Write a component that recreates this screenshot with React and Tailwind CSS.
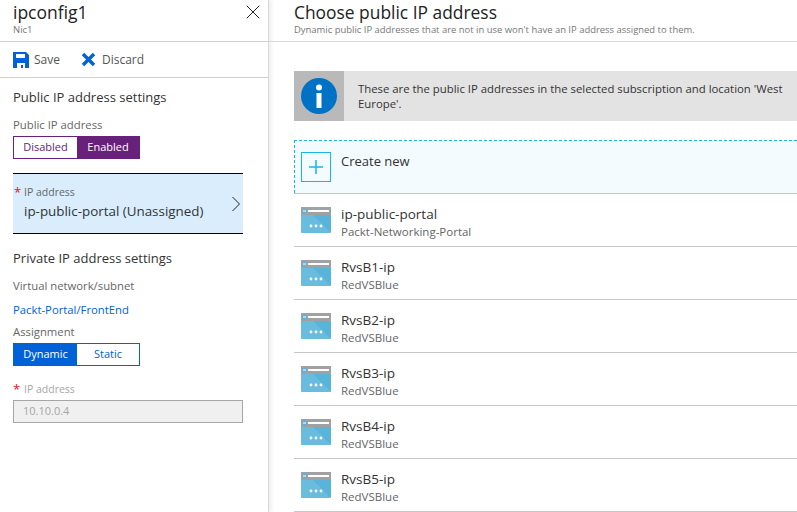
import React from "react";
import { X } from "lucide-react";

const font = { fontFamily: '"Open Sans", "Noto Sans", sans-serif' };

const SaveIcon = () => (
  <svg width="16" height="16" viewBox="0 0 16 16">
    <path d="M0 0h13l3 3v13H0z M3 2v4h9V2z M4 11v5h8v-5z" fill="#0062d6" fillRule="evenodd" />
    <rect x="8" y="13" width="2" height="3" fill="#0062d6" />
  </svg>
);

const DiscardIcon = () => (
  <svg width="15" height="15" viewBox="0 0 15 15">
    <path d="M2 2l11 11M13 2L2 13" stroke="#0062d6" strokeWidth="3.4" fill="none" />
  </svg>
);

const InfoIcon = () => (
  <svg width="36" height="36" viewBox="0 0 36 36">
    <circle cx="18" cy="18" r="18" fill="#0072c6" />
    <circle cx="18" cy="9.5" r="3" fill="#fff" />
    <rect x="15.5" y="15" width="5" height="15" fill="#fff" />
  </svg>
);

const PublicIpIcon = () => (
  <svg width="30" height="26" viewBox="0 0 30 26">
    <rect x="0" y="0" width="30" height="26" rx="1" fill="#59b4d9" />
    <path d="M0 26V8h12L30 26z" fill="#7cc5e3" opacity="0.45" />
    <rect x="0" y="0" width="30" height="8" fill="#a0a1a2" />
    <rect x="7" y="3" width="21" height="2" fill="#fff" />
    <circle cx="3.5" cy="4" r="2.5" fill="#59b4d9" />
    <path d="M2 4h3" stroke="#fff" strokeWidth="1" />
    <circle cx="10" cy="19" r="1.4" fill="#fff" />
    <circle cx="15" cy="19" r="1.4" fill="#fff" />
    <circle cx="20" cy="19" r="1.4" fill="#fff" />
  </svg>
);

const ips = [
  { name: "ip-public-portal", group: "Packt-Networking-Portal" },
  { name: "RvsB1-ip", group: "RedVSBlue" },
  { name: "RvsB2-ip", group: "RedVSBlue" },
  { name: "RvsB3-ip", group: "RedVSBlue" },
  { name: "RvsB4-ip", group: "RedVSBlue" },
  { name: "RvsB5-ip", group: "RedVSBlue" },
];

const IpRow = ({ item }) => (
  <div className="h-[53px] shrink-0 flex items-start gap-[10px] pl-[7px] pt-[11px] border-b border-[#c8c8c8]">
    <div className="pt-[2px]">
      <PublicIpIcon />
    </div>
    <div>
      <div className="text-[13.5px] leading-[18px] text-[#333]">{item.name}</div>
      <div className="mt-[1px] text-[11.5px] leading-[16px] text-[#666]">{item.group}</div>
    </div>
  </div>
);

export default function App() {
  return (
    <div style={font} className="w-[797px] h-[512px] overflow-hidden flex bg-white">
      {/* Left blade */}
      <div className="w-[269px] shrink-0 border-r border-[#d9d9d9] shadow-[2px_0_4px_rgba(0,0,0,0.08)] flex flex-col">
        <div className="h-[42px] shrink-0 border-b border-[#d0d0d0] pl-[13px] pr-[3px] flex justify-between">
          <div>
            <div className="text-[17.5px] leading-[24px] text-[#222]">ipconfig1</div>
            <div className="text-[9.5px] leading-[12px] text-[#777]">Nic1</div>
          </div>
          <X size={24} strokeWidth={1} className="text-[#222]" />
        </div>
        <div className="h-[36px] shrink-0 border-b border-[#d0d0d0] pl-[13px] flex items-center text-[12px] text-[#555]">
          <SaveIcon />
          <span className="ml-[5px]">Save</span>
          <span className="ml-[21px] flex">
            <DiscardIcon />
          </span>
          <span className="ml-[6px]">Discard</span>
        </div>

        <div className="text-[13px] leading-[18px] text-[#333] ml-[13px] mt-[10px]">Public IP address settings</div>
        <div className="text-[11.3px] leading-[14px] text-[#666] ml-[13px] mt-[12px]">Public IP address</div>
        <div className="flex ml-[13px] mt-[4px] w-[127px] h-[23px] border border-[#68217a] text-[11px]">
          <div className="w-[63px] flex items-center justify-center text-[#68217a]">Disabled</div>
          <div className="flex-1 flex items-center justify-center bg-[#68217a] text-white font-medium">Enabled</div>
        </div>

        <div className="ml-[13px] mt-[14px] w-[230px] h-[61px] bg-[#d9edfd] border-y border-black flex items-center justify-between pr-[2px]">
          <div className="pl-[1px] pb-[2px]">
            <div className="text-[10.5px] leading-[14px] text-[#666] flex">
              <span className="text-[#e81123] text-[13px] w-[10px]">*</span>IP address
            </div>
            <div className="mt-[3px] text-[13.4px] leading-[18px] text-[#333] ml-[10px]">ip-public-portal (Unassigned)</div>
          </div>
          <svg width="10" height="16" viewBox="0 0 10 16">
            <path d="M1.5 1l7 7-7 7" stroke="#222" strokeWidth="1" fill="none" />
          </svg>
        </div>

        <div className="text-[13px] leading-[18px] text-[#333] ml-[13px] mt-[15px]">Private IP address settings</div>
        <div className="text-[11.3px] leading-[14px] text-[#666] ml-[13px] mt-[12px]">Virtual network/subnet</div>
        <div className="text-[11.3px] leading-[14px] text-[#0062d6] ml-[13px] mt-[10px]">Packt-Portal/FrontEnd</div>
        <div className="text-[11.3px] leading-[14px] text-[#666] ml-[13px] mt-[8px]">Assignment</div>
        <div className="flex ml-[13px] mt-[4px] w-[127px] h-[23px] border border-[#0062d6] text-[11px]">
          <div className="w-[63px] flex items-center justify-center bg-[#0062d6] text-white font-medium">Dynamic</div>
          <div className="flex-1 flex items-center justify-center text-[#0062d6]">Static</div>
        </div>
        <div className="text-[10.5px] leading-[14px] text-[#a6a6a6] ml-[13px] mt-[16px] flex">
          <span className="text-[#e81123] text-[13px] w-[11px]">*</span>IP address
        </div>
        <div className="ml-[13px] mt-[4px] w-[230px] h-[23px] bg-[#f0f0f0] border border-[#a6a6a6] pl-[9px] flex items-center text-[11px] text-[#a6a6a6]">
          10.10.0.4
        </div>
      </div>

      {/* Right blade */}
      <div className="flex-1 min-w-0 flex flex-col">
        <div className="h-[42px] shrink-0 border-b border-[#d9d9d9] pl-[25px]">
          <div className="text-[17.4px] leading-[24px] text-[#222]">Choose public IP address</div>
          <div className="text-[9.45px] leading-[12px] text-[#777]">Dynamic public IP addresses that are not in use won't have an IP address assigned to them.</div>
        </div>
        <div className="ml-[25px] mt-[29px] h-[50px] shrink-0 bg-[#e3e3e3] flex">
          <div className="w-[50px] shrink-0 bg-[#b9b9b9] flex items-center justify-center">
            <InfoIcon />
          </div>
          <div className="pl-[14px] pt-[10px] pr-[10px] text-[11.35px] leading-[15px] text-[#333]">
            These are the public IP addresses in the selected subscription and location 'West Europe'.
          </div>
        </div>
        <div className="ml-[25px]">
          <div className="mt-[19px] h-[53px] bg-[#f3fbfe] border border-dashed border-[#1ab4e6] border-r-0 border-b-0 flex items-start pl-[6px] pt-[11px]">
            <div className="w-[30px] h-[30px] border border-[#1ab4e6] flex items-center justify-center">
              <svg width="16" height="16" viewBox="0 0 16 16">
                <path d="M8 1v14M1 8h14" stroke="#1ab4e6" strokeWidth="1.5" />
              </svg>
            </div>
            <div className="ml-[10px] text-[13px] leading-[18px] text-[#333]">Create new</div>
          </div>
          <div className="border-t border-[#c8c8c8]">
            {ips.map((item) => (
              <IpRow key={item.name} item={item} />
            ))}
          </div>
        </div>
      </div>
    </div>
  );
}
